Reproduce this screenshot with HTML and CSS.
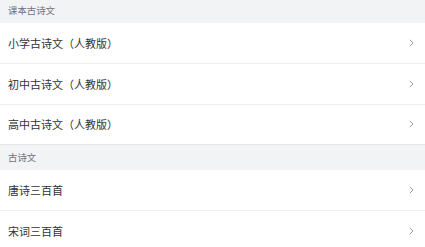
FILE: index.html
```html
<!DOCTYPE html>
<html lang="zh">
<head>
<meta charset="utf-8">
<link rel="stylesheet" href="styles.css">
</head>
<body>
<div class="page">
  <div class="group-title first">课本古诗文</div>
  <div class="group">
    <div class="cell"><span class="label">小学古诗文（人教版）</span><span class="arrow"><svg width="5" height="8" viewBox="0 0 5 8"><path d="M0.8 0.8 L4 4 L0.8 7.2" fill="none" stroke="#9a9b9d" stroke-width="1"/></svg></span></div>
    <div class="cell"><span class="label">初中古诗文（人教版）</span><span class="arrow"><svg width="5" height="8" viewBox="0 0 5 8"><path d="M0.8 0.8 L4 4 L0.8 7.2" fill="none" stroke="#9a9b9d" stroke-width="1"/></svg></span></div>
    <div class="cell"><span class="label">高中古诗文（人教版）</span><span class="arrow"><svg width="5" height="8" viewBox="0 0 5 8"><path d="M0.8 0.8 L4 4 L0.8 7.2" fill="none" stroke="#9a9b9d" stroke-width="1"/></svg></span></div>
  </div>
  <div class="group-title">古诗文</div>
  <div class="group">
    <div class="cell"><span class="label">唐诗三百首</span><span class="arrow"><svg width="5" height="8" viewBox="0 0 5 8"><path d="M0.8 0.8 L4 4 L0.8 7.2" fill="none" stroke="#9a9b9d" stroke-width="1"/></svg></span></div>
    <div class="cell"><span class="label">宋词三百首</span><span class="arrow"><svg width="5" height="8" viewBox="0 0 5 8"><path d="M0.8 0.8 L4 4 L0.8 7.2" fill="none" stroke="#9a9b9d" stroke-width="1"/></svg></span></div>
  </div>
</div>
</body>
</html>
```
FILE: styles.css
```css
html, body {
  margin: 0;
  padding: 0;
  background: #ffffff;
  overflow: hidden;
}
body {
  font-family: "Noto Sans CJK SC", "Noto Sans", sans-serif;
}
.page {
  display: flex;
  flex-direction: column;
  margin-top: -3px;
}
.group-title {
  height: 26px;
  box-sizing: border-box;
  display: flex;
  align-items: center;
  padding-left: 8px;
  background: #f2f3f5;
  color: #717275;
  font-size: 9.4px;
  border-top: 1px solid #e6e7ea;
}
.group-title.first {
  border-top: none;
}
.group {
  display: flex;
  flex-direction: column;
  background: #fff;
}
.cell {
  height: 40.25px;
  box-sizing: border-box;
  display: flex;
  align-items: center;
  justify-content: space-between;
  padding: 0 11px 0 8px;
  border-top: 1px solid #eeeff1;
  color: #323233;
  font-size: 11px;
}
.cell:first-child {
  border-top: none;
}
.arrow {
  display: flex;
  align-items: center;
}
.arrow svg {
  display: block;
}
```
